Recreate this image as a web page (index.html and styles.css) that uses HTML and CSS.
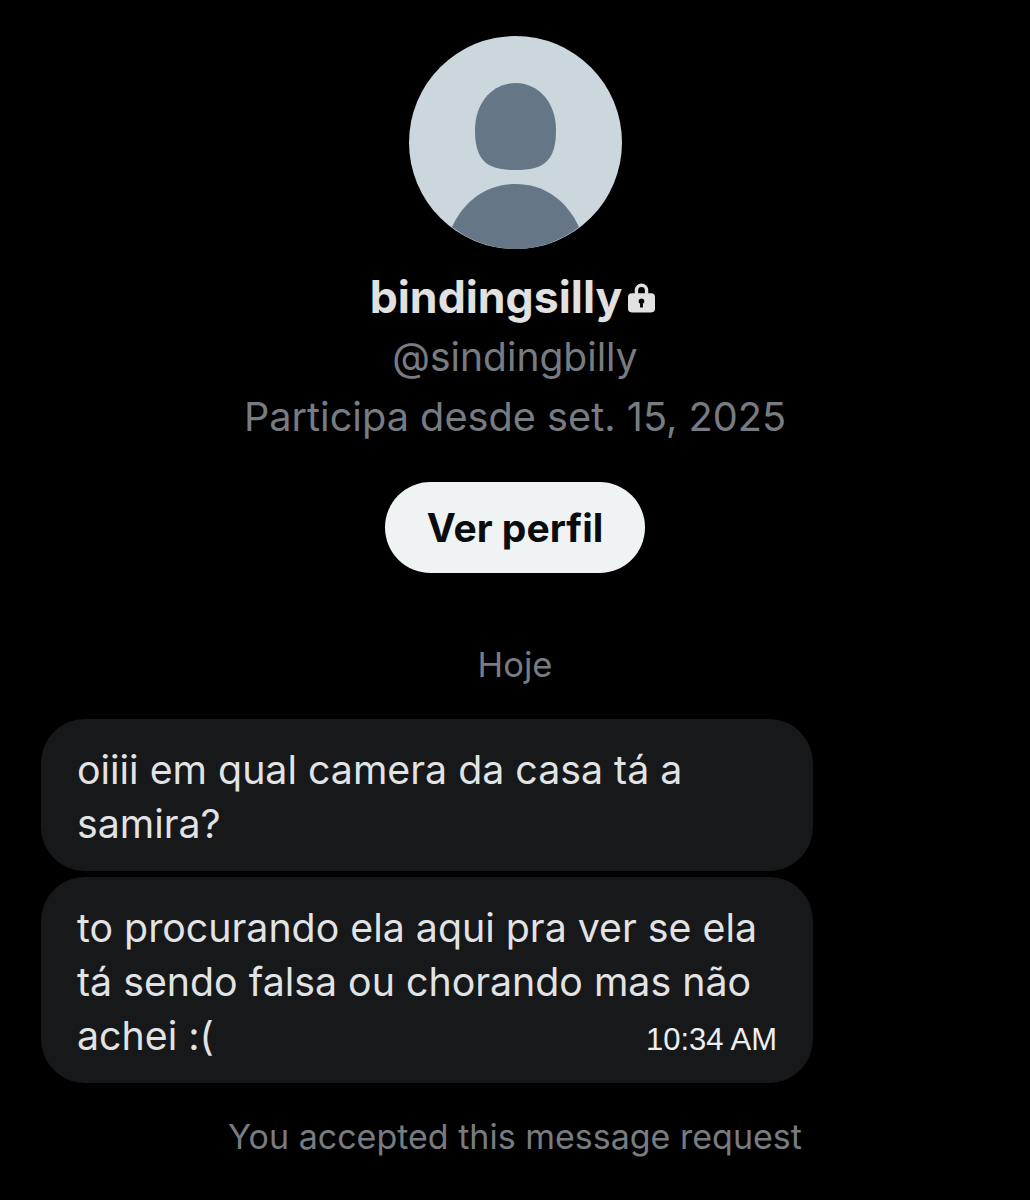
FILE: index.html
```html
<!DOCTYPE html>
<html>
  <head>
    <meta charset="utf-8">
    <title>bindingsilly</title>
    <link rel="stylesheet" href="styles.css">
  </head>
  <body>
    <section class="profile">
      <svg class="avatar" viewBox="0 0 213 213">
        <circle cx="106.5" cy="106.5" r="106.5" fill="#ccd6dd"/>
        <path fill="#657786" d="M106.5 47C84 47 66 66 66 94c0 13 2 23 8 30 7 8 18 10 32.500 10s25.500-2 32.500-10c6-7 8-17 8-30 0-28-18-47-40.500-47z"/>
        <path fill="#657786" d="M43 191C56 163 79 148 106.500 148S157 163 170 191C152 205 130 213 106.500 213S61 205 43 191z"/>
      </svg>
      <h1 class="name">bindingsilly<svg class="lock" viewBox="0 0 28 32"><path fill="#e1e1e1" fill-rule="evenodd" d="M7 12V9a7 7 0 0 1 14 0v3h3a4 4 0 0 1 4 4v12a4 4 0 0 1-4 4H4a4 4 0 0 1-4-4V16a4 4 0 0 1 4-4zm3.500 0h7V9a3.500 3.500 0 0 0-7 0zM14 17.500a3 3 0 0 0-1.500 5.600V27h3v-3.900A3 3 0 0 0 14 17.500z"/></svg></h1>
      <div class="handle">@sindingbilly</div>
      <div class="joined">Participa desde set. 15, 2025</div>
      <button class="view-btn">Ver perfil</button>
    </section>
    <div class="day">Hoje</div>
    <section class="messages">
      <div class="bubble">oiiii em qual camera da casa tá a samira?</div>
      <div class="bubble">
        <div>to procurando ela aqui pra ver se ela tá sendo falsa ou chorando mas não</div>
        <div class="last-line">
          <span>achei :(</span>
          <span class="time">10:34 AM</span>
        </div>
      </div>
    </section>
    <div class="accepted">You accepted this message request</div>
  </body>
</html>
```

FILE: styles.css
```css
html, body {
  margin: 0;
  background: #000;
}
body {
  width: 1030px;
  height: 1200px;
  overflow: hidden;
  font-family: Inter, "Noto Sans", sans-serif;
}
.profile {
  display: flex;
  flex-direction: column;
  align-items: center;
  padding-top: 36px;
}
.avatar {
  width: 213px;
  height: 213px;
  display: block;
}
.name {
  display: flex;
  align-items: center;
  margin: 20px 5px 0 0;
  height: 56px;
  font-size: 44.600px;
  font-weight: 700;
  line-height: 56px;
  color: #e1e1e1;
}
.lock {
  width: 27px;
  height: 32px;
  margin-left: 6px;
}
.handle {
  margin-top: 6px;
  font-size: 39px;
  line-height: 52px;
  color: #777c82;
}
.joined {
  margin-top: 8px;
  font-size: 39.700px;
  line-height: 52px;
  color: #777c82;
}
.view-btn {
  margin-top: 39px;
  width: 260px;
  height: 91px;
  border: 0;
  border-radius: 46px;
  background: #eff3f4;
  color: #0a0c0e;
  font-family: inherit;
  font-size: 39px;
  font-weight: 700;
}
.day {
  margin-top: 68px;
  text-align: center;
  font-size: 34.500px;
  line-height: 48px;
  color: #777c82;
}
.messages {
  display: flex;
  flex-direction: column;
  gap: 6px;
  margin: 30px 0 0 41px;
  width: 772px;
}
.bubble {
  padding: 24px 36px 20px;
  border-radius: 44px;
  background: #16181a;
  color: #e1e3e4;
  font-size: 39.300px;
  line-height: 54px;
}
.last-line {
  display: flex;
  justify-content: space-between;
  align-items: center;
}
.time {
  padding-top: 8px;
  font-family: "Liberation Sans", sans-serif;
  font-size: 31px;
  line-height: 40px;
  color: #eceeef;
}
.accepted {
  margin-top: 30px;
  text-align: center;
  font-size: 34px;
  line-height: 48px;
  color: #777c82;
}
```
